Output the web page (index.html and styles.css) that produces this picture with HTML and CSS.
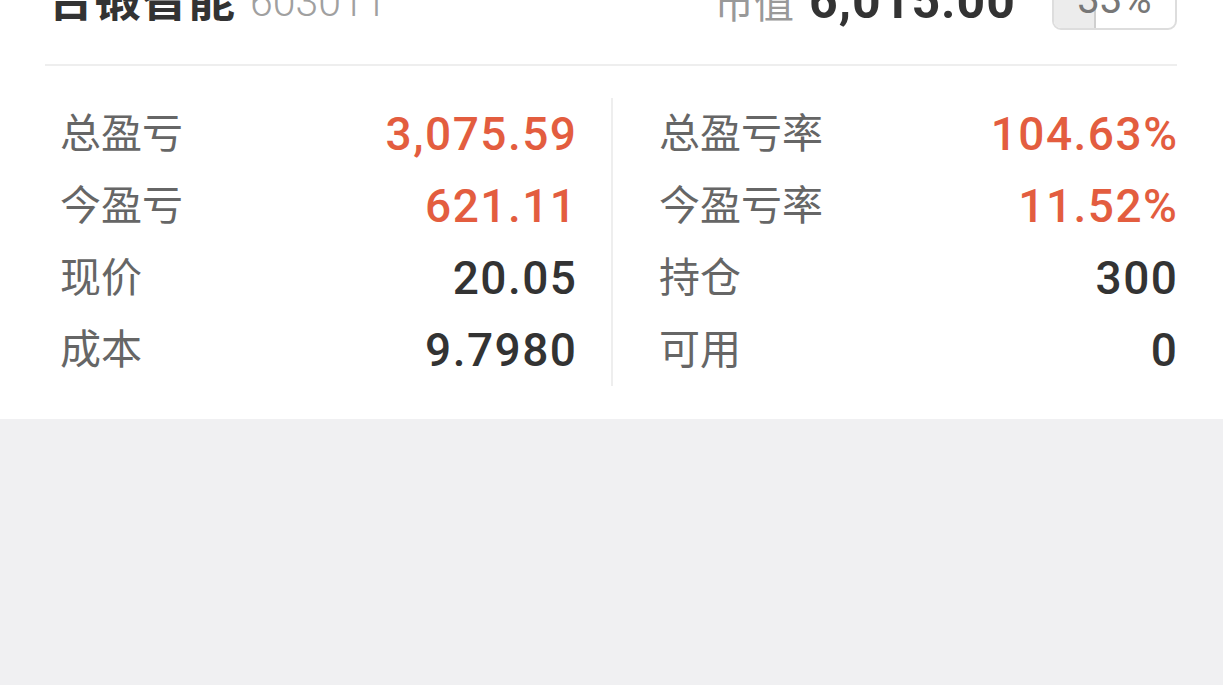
FILE: index.html
```html
<!DOCTYPE html>
<html lang="zh-CN">
<head>
    <meta charset="UTF-8">
    <meta name="viewport" content="width=device-width, initial-scale=1.0">
    <title>持仓详情</title>
    <link rel="stylesheet" href="styles.css">
</head>
<body>
    <div class="position-card">
        <div class="stock-head">
            <div class="stock-name">
                <h1>合锻智能</h1>
                <span class="stock-code">603011</span>
            </div>
            <div class="stock-value">
                <div class="value-group">
                    <span class="value-label">市值</span>
                    <span class="value-num">6,015.00</span>
                </div>
                <span class="ratio-badge">
                    <span class="ratio-fill" style="width: 33%"></span>
                    <span class="ratio-text">33%</span>
                </span>
            </div>
        </div>

        <div class="stats">
            <div class="stats-col">
                <div class="stat-row">
                    <span class="stat-label">总盈亏</span>
                    <span class="stat-value up">3,075.59</span>
                </div>
                <div class="stat-row">
                    <span class="stat-label">今盈亏</span>
                    <span class="stat-value up">621.11</span>
                </div>
                <div class="stat-row">
                    <span class="stat-label">现价</span>
                    <span class="stat-value">20.05</span>
                </div>
                <div class="stat-row">
                    <span class="stat-label">成本</span>
                    <span class="stat-value">9.7980</span>
                </div>
            </div>
            <div class="stats-col right">
                <div class="stat-row">
                    <span class="stat-label">总盈亏率</span>
                    <span class="stat-value up">104.63%</span>
                </div>
                <div class="stat-row">
                    <span class="stat-label">今盈亏率</span>
                    <span class="stat-value up">11.52%</span>
                </div>
                <div class="stat-row">
                    <span class="stat-label">持仓</span>
                    <span class="stat-value">300</span>
                </div>
                <div class="stat-row">
                    <span class="stat-label">可用</span>
                    <span class="stat-value">0</span>
                </div>
            </div>
        </div>
    </div>
</body>
</html>
```

FILE: styles.css
```css
body {
    margin: 0;
    padding: 0;
    background-color: #f0f0f2;
    font-family: Roboto, "Noto Sans CJK SC", sans-serif;
    color: #333;
    overflow: hidden;
}

.position-card {
    background: #fff;
    margin-top: -36px;
    padding: 0 46px 33px 45px;
}

/* 顶部：名称 + 市值 */
.stock-head {
    box-sizing: border-box;
    display: flex;
    justify-content: space-between;
    align-items: flex-end;
    height: 102px;
    padding-bottom: 34px;
    border-bottom: 2px solid #eeeeee;
}

.stock-name {
    display: flex;
    align-items: baseline;
    gap: 15px;
}

.stock-name h1 {
    margin: 0 0 0 2px;
    font-family: "Noto Sans CJK SC", sans-serif;
    font-size: 47px;
    font-weight: 700;
    color: #333;
}

.stock-code {
    font-family: Roboto, sans-serif;
    font-size: 41px;
    font-weight: 300;
    color: #a0a0a0;
}

.stock-value {
    display: flex;
    align-items: flex-end;
}

.value-group {
    display: flex;
    align-items: baseline;
    gap: 15px;
    margin-right: 36px;
}

.value-label {
    font-family: "Noto Sans CJK SC", sans-serif;
    font-size: 40px;
    color: #999;
}

.value-num {
    font-size: 50px;
    font-weight: 700;
    letter-spacing: 1px;
    color: #333;
}

.ratio-badge {
    position: relative;
    box-sizing: border-box;
    display: flex;
    align-items: flex-end;
    justify-content: center;
    width: 125px;
    height: 48px;
    padding-bottom: 5px;
    border: 2px solid #dddddd;
    border-radius: 9px;
    overflow: hidden;
}

.ratio-fill {
    position: absolute;
    left: 0;
    top: 0;
    bottom: 0;
    background: #ececec;
    border-right: 2px solid #cfcfcf;
}

.ratio-text {
    position: relative;
    font-size: 40px;
    color: #777;
}

/* 持仓数据 */
.stats {
    display: grid;
    grid-template-columns: 1fr 1fr;
    margin-top: 32px;
}

.stats-col {
    padding: 0 35px 0 15px;
}

.stats-col.right {
    border-left: 2px solid #eeeeee;
    padding: 0 0 0 46px;
}

.stat-row {
    display: flex;
    justify-content: space-between;
    align-items: center;
    height: 72px;
}

.stat-label {
    font-family: "Noto Sans CJK SC", sans-serif;
    font-size: 41px;
    color: #666;
    padding-bottom: 8px;
}

.stat-value {
    font-size: 46px;
    font-weight: 500;
    letter-spacing: 1.5px;
    margin-right: -1.5px;
    color: #333;
}

.stat-value.up {
    color: #e35d3f;
}
```
